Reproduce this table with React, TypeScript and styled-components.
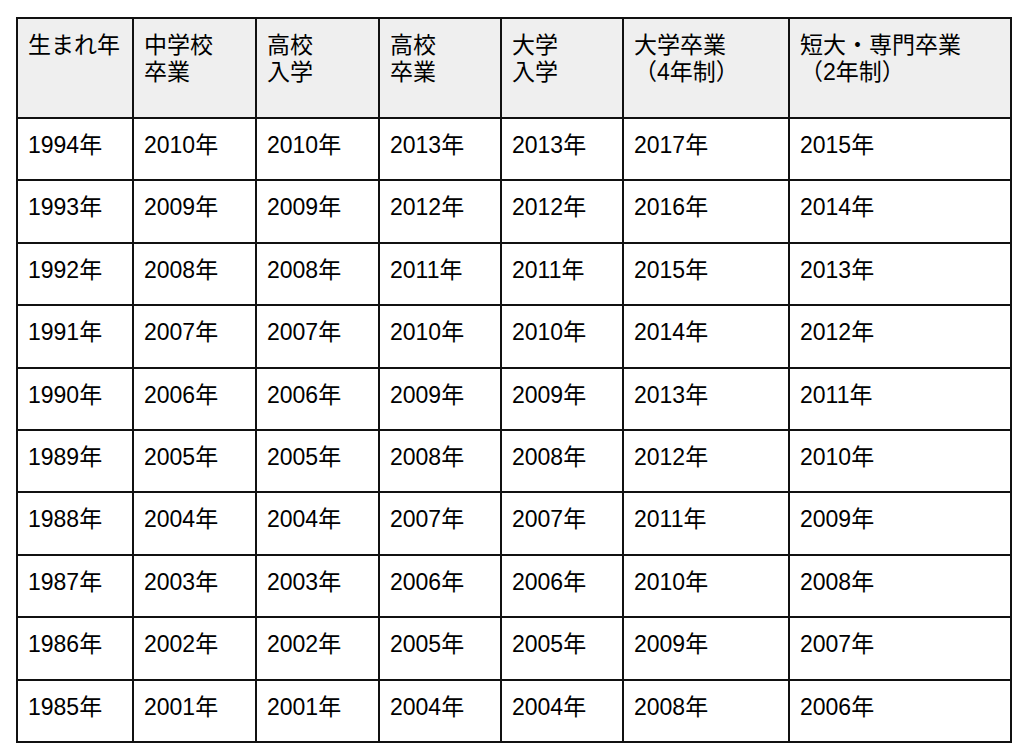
import React from 'react'
import styled, { createGlobalStyle } from 'styled-components'

const GlobalStyle = createGlobalStyle`
  html, body {
    margin: 0;
    padding: 0;
    background: #ffffff;
  }

  body {
    font-family: 'Liberation Sans', 'Noto Sans CJK JP', sans-serif;
    color: #000000;
  }
`

const columns = [116, 123, 123, 122, 122, 166, 222]

const headers: string[][] = [
  ['生まれ年'],
  ['中学校', '卒業'],
  ['高校', '入学'],
  ['高校', '卒業'],
  ['大学', '入学'],
  ['大学卒業', '（4年制）'],
  ['短大・専門卒業', '（2年制）'],
]

// each row: birth year -> offsets for the other columns
const offsets = [16, 16, 19, 19, 23, 21]
const births = [1994, 1993, 1992, 1991, 1990, 1989, 1988, 1987, 1986, 1985]

const Page = styled.main`
  padding: 17px 0 0 16px;
`

const Table = styled.table`
  border-collapse: collapse;
  table-layout: fixed;
  width: 996px;
  font-size: 23px;
  line-height: 27px;
`

const HeadRow = styled.tr`
  height: 100px;
  background: #efefef;
`

const BodyRow = styled.tr`
  height: 62.4px;
`

const Cell = styled.td`
  border: 2px solid #111111;
  padding: 13px 8px 0 10px;
  vertical-align: top;
  text-align: left;
  font-weight: normal;
  white-space: nowrap;
`

const HeadCell = styled(Cell).attrs({ as: 'th' })``

export default function App() {
  return (
    <>
      <GlobalStyle />
      <Page>
        <Table>
          <colgroup>
            {columns.map((w, i) => (
              <col key={i} style={{ width: w }} />
            ))}
          </colgroup>
          <thead>
            <HeadRow>
              {headers.map((lines, i) => (
                <HeadCell key={i}>
                  {lines.map((line, j) => (
                    <div key={j}>{line}</div>
                  ))}
                </HeadCell>
              ))}
            </HeadRow>
          </thead>
          <tbody>
            {births.map(year => (
              <BodyRow key={year}>
                <Cell>{year}年</Cell>
                {offsets.map((o, i) => (
                  <Cell key={i}>{year + o}年</Cell>
                ))}
              </BodyRow>
            ))}
          </tbody>
        </Table>
      </Page>
    </>
  )
}
